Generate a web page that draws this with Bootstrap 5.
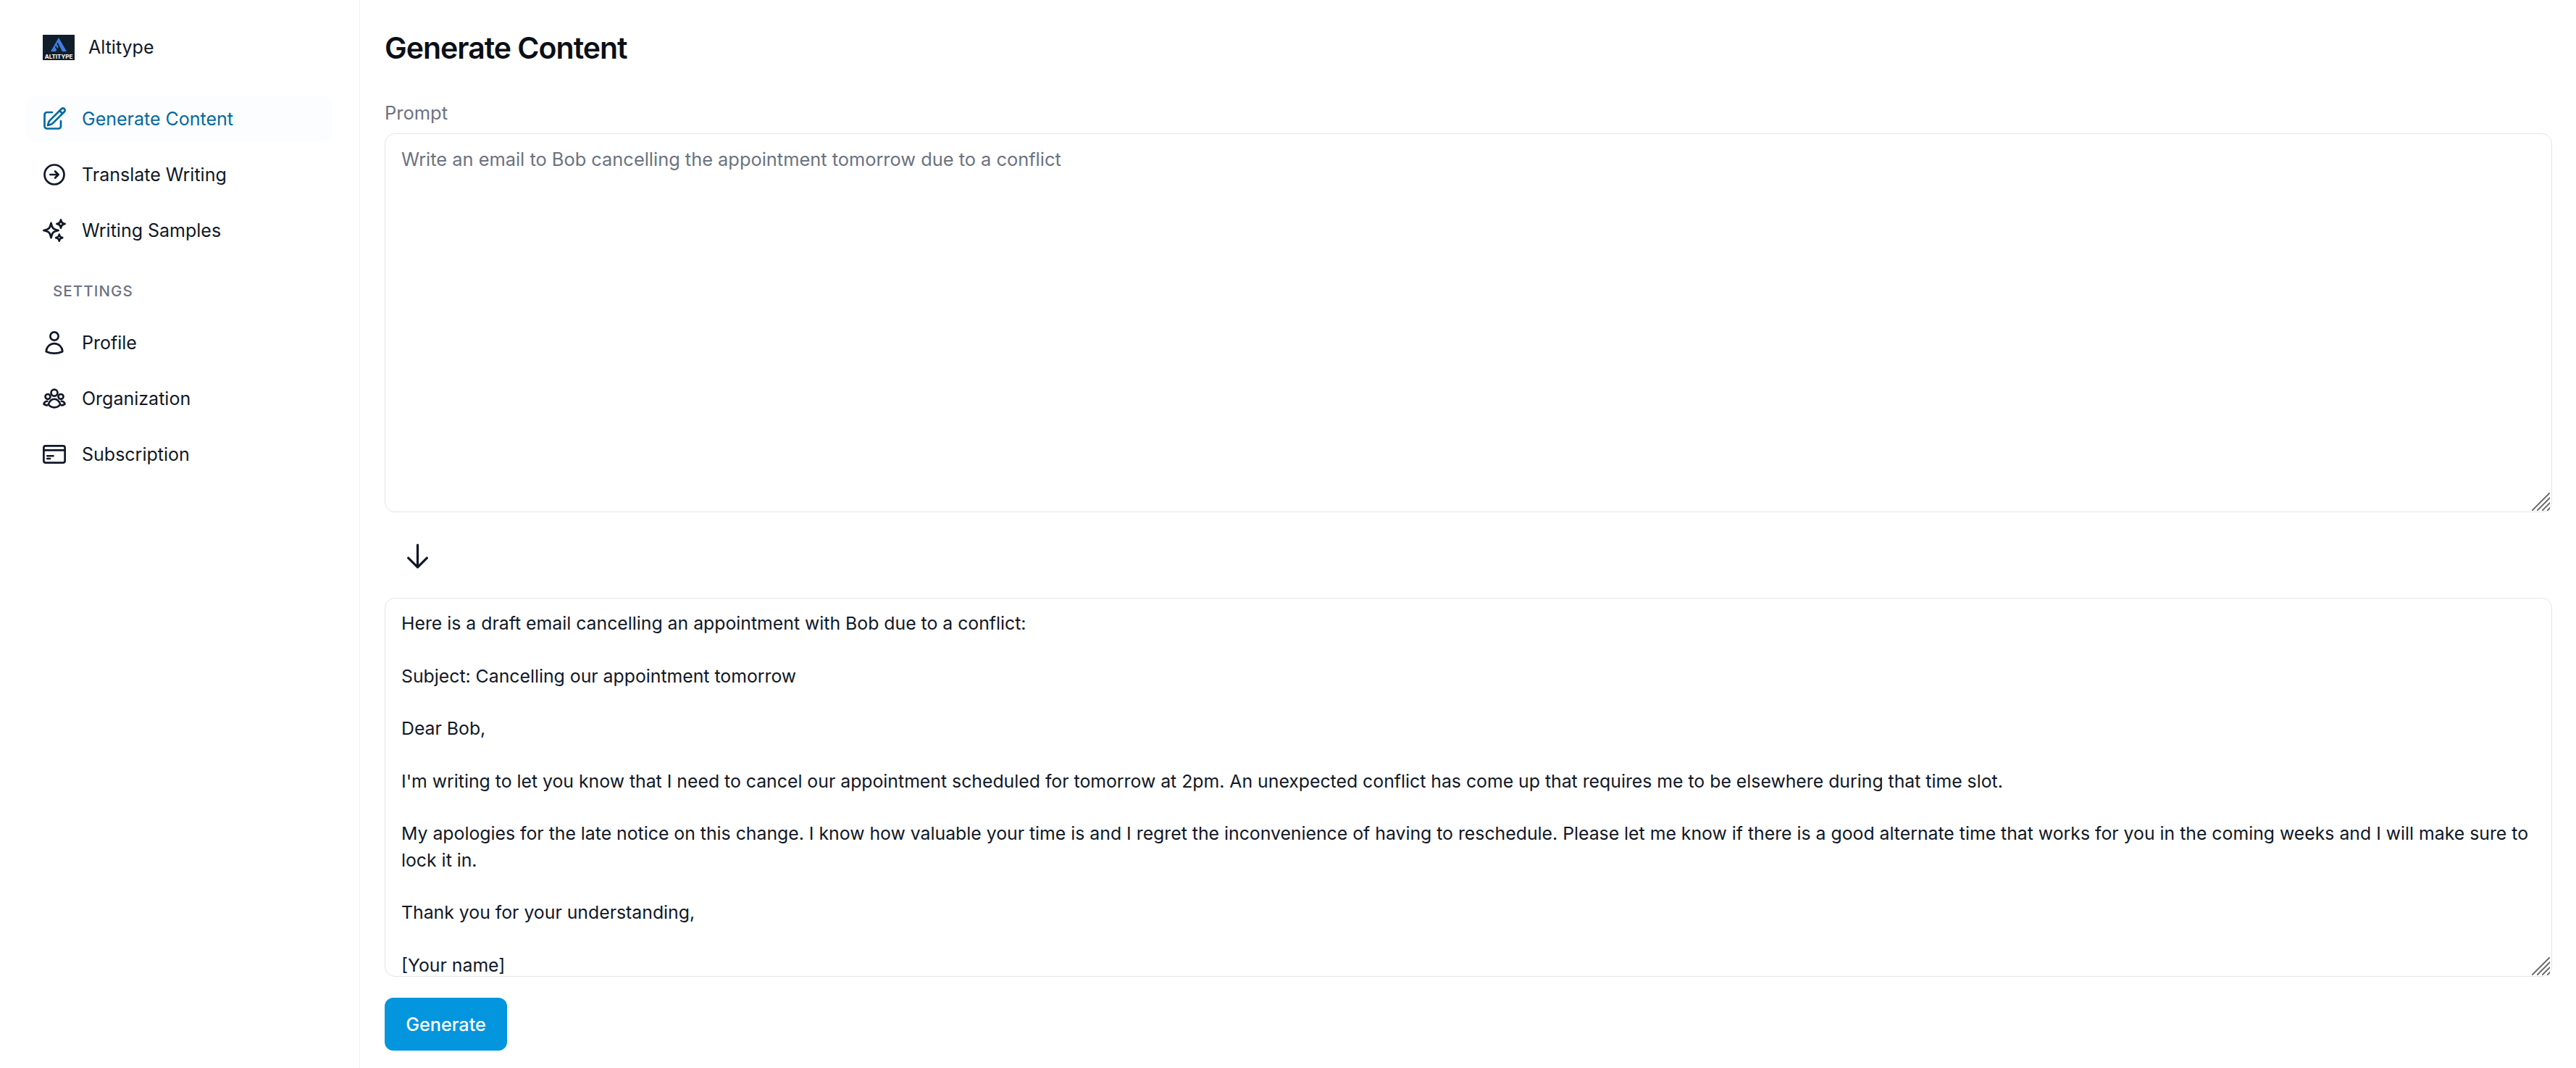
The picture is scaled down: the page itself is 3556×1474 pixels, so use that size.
<!DOCTYPE html>
<html lang="en">
<head>
  <meta charset="UTF-8">
  <meta name="viewport" content="width=device-width, initial-scale=1.0">
  <title>Altitype</title>
  <link rel="stylesheet" href="https://cdn.jsdelivr.net/npm/bootstrap@5.3.0/dist/css/bootstrap.min.css">
  <style>
    html, body {
      height: 100%;
    }
    body {
      font-family: Inter, "Liberation Sans", sans-serif;
      font-size: 25px;
      line-height: 36px;
      color: #111827;
      background: #fff;
      overflow: hidden;
    }
    .app-side {
      width: 497px;
      height: 1474px;
      padding: 48px 38px 0 36px;
      border-right: 1px solid #f1f2f4;
    }
    .brand-row {
      height: 35px;
      margin-left: 23px;
      margin-bottom: 49px;
      line-height: 35px;
    }
    .brand-logo {
      width: 44px;
      height: 35px;
      margin-right: 19px;
      background: #101e2c;
      flex-direction: column;
      align-items: center;
      padding-top: 3px;
      overflow: hidden;
    }
    .brand-logo span {
      font-size: 8px;
      line-height: 10px;
      font-weight: 700;
      color: #fff;
      margin-top: 1px;
    }
    .side-link {
      height: 63px;
      margin-bottom: 14px;
      padding-left: 21px;
      border-radius: 12px;
      color: #111827;
      text-decoration: none;
    }
    .side-link svg {
      width: 36px;
      height: 36px;
      margin-right: 20px;
      flex-shrink: 0;
      stroke-width: 1.8;
    }
    .side-link.is-current {
      background: #fbfdff;
      color: #0369a1;
    }
    .side-head {
      margin: 39px 0 26px 37px;
      font-size: 20.5px;
      line-height: 27px;
      font-weight: 500;
      letter-spacing: 1.1px;
      color: #6b7280;
    }
    .app-main {
      padding: 42px 33px 0 34px;
    }
    .page-title {
      font-size: 41px;
      line-height: 48px;
      font-weight: 600;
      letter-spacing: -1px;
      margin: 0 0 50px;
      color: #0b0f17;
    }
    .prompt-label {
      display: block;
      font-size: 25.5px;
      line-height: 32px;
      color: #6b7280;
      margin-bottom: 12px;
    }
    .text-box {
      height: 523px;
    }
    .text-box textarea {
      display: block;
      width: 100%;
      height: 100%;
      padding: 17px 10px 17px 22px;
      font-size: 25.4px;
      line-height: 36px;
      color: #111827;
      border: 1px solid #e3e5e9;
      border-radius: 14px;
      resize: none;
      overflow: hidden;
      box-shadow: none;
    }
    .text-box textarea::placeholder {
      color: #6b7280;
      opacity: 1;
    }
    #output {
      font-size: 24.8px;
      line-height: 36.3px;
      padding-top: 16px;
    }
    .grip {
      position: absolute;
      right: 3px;
      bottom: 2px;
      width: 25px;
      height: 25px;
    }
    .flow-arrow {
      display: block;
      width: 41px;
      height: 41px;
      margin: 40px 0 37px 25px;
    }
    .btn.go-btn {
      margin-top: 29px;
      width: 169px;
      height: 73px;
      padding: 0;
      font-size: 25.2px;
      font-weight: 500;
      line-height: 36px;
      border: 0;
      border-radius: 12px;
      color: #fff;
      background: #0395de;
    }
  </style>
</head>
<body>
  <div class="d-flex">
    <aside class="app-side flex-shrink-0">
      <div class="brand-row d-flex align-items-center">
        <div class="brand-logo d-flex">
          <svg width="24" height="21" viewBox="0 0 24 21"><path fill="#3f7fe0" d="M12 1 23 20H16L12 13 8 20H1z"/><path fill="#101e2c" d="M10.500 7.500 17 20h-2L9.500 9.500zM8 12l4.500 8h-2L7 14z"/></svg>
          <span>ALTITYPE</span>
        </div>
        Altitype
      </div>
      <a class="side-link is-current d-flex align-items-center" href="#">
        <svg viewBox="0 0 24 24" fill="none" stroke="currentColor" stroke-linecap="round" stroke-linejoin="round"><path d="M16.862 4.487l1.687-1.688a1.875 1.875 0 112.652 2.652L10.582 16.070a4.500 4.500 0 01-1.897 1.130L6 18l.8-2.685a4.500 4.500 0 011.130-1.897l8.932-8.931zm0 0L19.500 7.125M18 14v4.750A2.250 2.250 0 0115.750 21H5.250A2.250 2.250 0 013 18.750V8.250A2.250 2.250 0 015.250 6H10"/></svg>
        Generate Content
      </a>
      <a class="side-link d-flex align-items-center" href="#">
        <svg viewBox="0 0 24 24" fill="none" stroke="currentColor" stroke-linecap="round" stroke-linejoin="round"><path d="M12.750 15l3-3m0 0l-3-3m3 3h-7.500M21 12a9 9 0 11-18 0 9 9 0 0118 0z"/></svg>
        Translate Writing
      </a>
      <a class="side-link d-flex align-items-center" href="#">
        <svg viewBox="0 0 24 24" fill="none" stroke="currentColor" stroke-linecap="round" stroke-linejoin="round"><path d="M9.813 15.904L9 18.750l-.813-2.846a4.500 4.500 0 00-3.090-3.090L2.250 12l2.846-.813a4.500 4.500 0 003.090-3.090L9 5.250l.813 2.846a4.500 4.500 0 003.090 3.090L15.750 12l-2.846.813a4.500 4.500 0 00-3.090 3.090zM18.259 8.715L18 9.750l-.259-1.035a3.375 3.375 0 00-2.455-2.456L14.250 6l1.036-.259a3.375 3.375 0 002.455-2.456L18 2.250l.259 1.035a3.375 3.375 0 002.456 2.456L21.750 6l-1.035.259a3.375 3.375 0 00-2.456 2.456zM16.894 20.567L16.500 21.750l-.394-1.183a2.250 2.250 0 00-1.423-1.423L13.500 18.750l1.183-.394a2.250 2.250 0 001.423-1.423l.394-1.183.394 1.183a2.250 2.250 0 001.423 1.423l1.183.394-1.183.394a2.250 2.250 0 00-1.423 1.423z"/></svg>
        Writing Samples
      </a>
      <div class="side-head">SETTINGS</div>
      <a class="side-link d-flex align-items-center" href="#">
        <svg viewBox="0 0 24 24" fill="none" stroke="currentColor" stroke-linecap="round" stroke-linejoin="round"><path d="M15.750 6a3.750 3.750 0 11-7.500 0 3.750 3.750 0 017.500 0zM4.501 20.118a7.500 7.500 0 0114.998 0A17.933 17.933 0 0112 21.750c-2.676 0-5.216-.584-7.499-1.632z"/></svg>
        Profile
      </a>
      <a class="side-link d-flex align-items-center" href="#">
        <svg viewBox="0 0 24 24" fill="none" stroke="currentColor" stroke-linecap="round" stroke-linejoin="round"><circle cx="12" cy="6.700" r="3"/><circle cx="6" cy="10.300" r="2.300"/><circle cx="18" cy="10.300" r="2.300"/><path d="M6.500 17.500c1-3 3-5 5.500-5s4.500 2 5.500 5c-1.500 1.800-3.500 2.700-5.500 2.700s-4-.9-5.500-2.700z"/><path d="M5.500 14.500c-1.700 0-2.800 1-3.200 2.500.8.8 2 1.200 3.200 1.200M18.500 14.500c1.700 0 2.800 1 3.200 2.500-.8.8-2 1.200-3.200 1.200"/></svg>
        Organization
      </a>
      <a class="side-link d-flex align-items-center" href="#">
        <svg viewBox="0 0 24 24" fill="none" stroke="currentColor" stroke-linecap="round" stroke-linejoin="round"><rect x="2.250" y="4.250" width="19.500" height="15.500" rx="1.750"/><path d="M2.250 8.250h19.500M5.500 13.500h5.500M5.500 16h2.500"/></svg>
        Subscription
      </a>
    </aside>

    <main class="app-main flex-grow-1">
      <h1 class="page-title">Generate Content</h1>
      <label class="prompt-label" for="prompt">Prompt</label>
      <div class="text-box position-relative">
        <textarea class="form-control" id="prompt" placeholder="Write an email to Bob cancelling the appointment tomorrow due to a conflict"></textarea>
        <svg class="grip" viewBox="0 0 25 25" stroke="#777" stroke-width="2" shape-rendering="crispEdges"><path d="M0 25 25 0M7 25 25 7M14 25 25 14M21 25 25 21"/></svg>
      </div>
      <svg class="flow-arrow" viewBox="0 0 24 24" fill="none" stroke="#111827" stroke-width="1.9" stroke-linecap="round" stroke-linejoin="round"><path d="M19.500 13.500 12 21m0 0-7.500-7.500M12 21V3"/></svg>
      <div class="text-box position-relative">
        <textarea class="form-control" id="output">Here is a draft email cancelling an appointment with Bob due to a conflict:

Subject: Cancelling our appointment tomorrow

Dear Bob,

I'm writing to let you know that I need to cancel our appointment scheduled for tomorrow at 2pm. An unexpected conflict has come up that requires me to be elsewhere during that time slot.

My apologies for the late notice on this change. I know how valuable your time is and I regret the inconvenience of having to reschedule. Please let me know if there is a good alternate time that works for you in the coming weeks and I will make sure to lock it in.

Thank you for your understanding,

[Your name]</textarea>
        <svg class="grip" viewBox="0 0 25 25" stroke="#777" stroke-width="2" shape-rendering="crispEdges"><path d="M0 25 25 0M7 25 25 7M14 25 25 14M21 25 25 21"/></svg>
      </div>
      <button type="button" class="btn go-btn d-block">Generate</button>
    </main>
  </div>
  <script src="https://cdn.jsdelivr.net/npm/bootstrap@5.3.0/dist/js/bootstrap.bundle.min.js"></script>
</body>
</html>
